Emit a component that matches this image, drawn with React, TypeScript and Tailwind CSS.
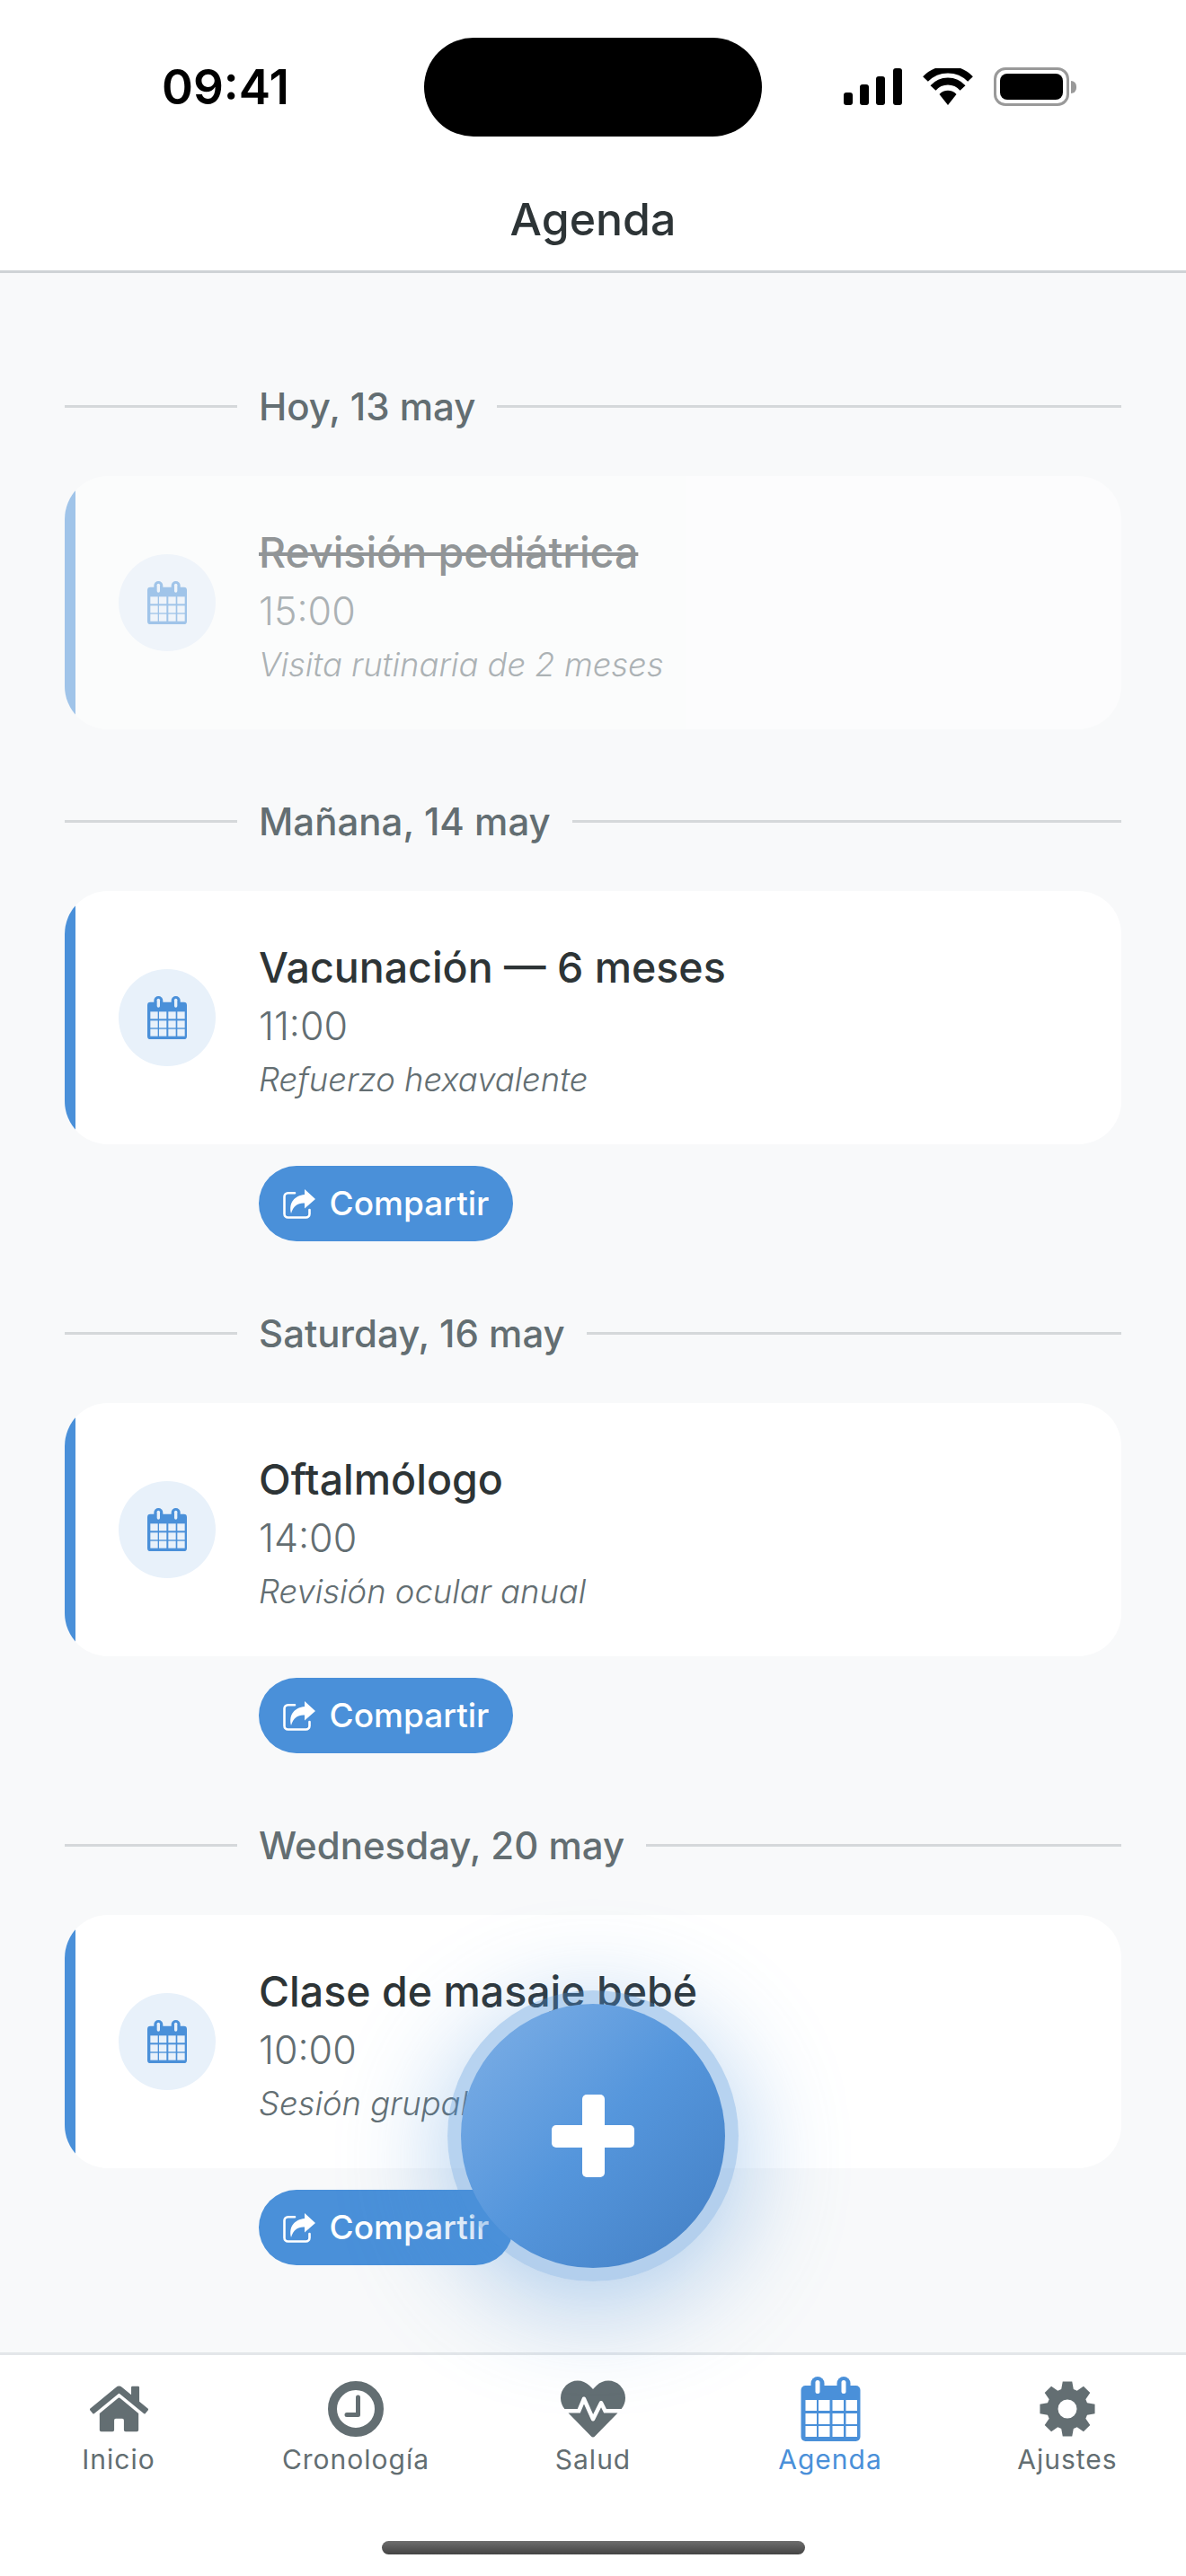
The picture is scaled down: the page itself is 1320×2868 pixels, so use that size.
import { FaHome, FaHeartbeat } from "react-icons/fa"

const font = { fontFamily: "Inter, 'Noto Sans', sans-serif" }

const events = [
  { date: "Hoy, 13 may", title: "Revisión pediátrica", time: "15:00", note: "Visita rutinaria de 2 meses", done: true },
  { date: "Mañana, 14 may", title: "Vacunación — 6 meses", time: "11:00", note: "Refuerzo hexavalente" },
  { date: "Saturday, 16 may", title: "Oftalmólogo", time: "14:00", note: "Revisión ocular anual" },
  { date: "Wednesday, 20 may", title: "Clase de masaje bebé", time: "10:00", note: "Sesión grupal" },
]

function gearPath() {
  const pts: string[] = []
  const teeth = 8
  const step = (Math.PI * 2) / teeth
  for (let i = 0; i < teeth; i++) {
    const a = i * step - Math.PI / 2
    const p = (r: number, o: number) =>
      `${(31 + r * Math.cos(a + o)).toFixed(2)} ${(31 + r * Math.sin(a + o)).toFixed(2)}`
    pts.push(p(23, -0.3), p(31, -0.17), p(31, 0.17), p(23, 0.3))
  }
  const hole = "M31 20.5a10.5 10.5 0 1 0 0 21a10.5 10.5 0 1 0 0-21z"
  return `M${pts.join("L")}z${hole}`
}

function CalendarIcon({ className, cut }: { className: string; cut: string }) {
  const cols = [5, 19.5, 35, 50]
  const rows = [26, 41, 55]
  return (
    <svg viewBox="0 0 66 72" className={className} fill="currentColor">
      <rect x="0" y="10" width="66" height="62" rx="5" />
      <rect x="11" y="0" width="15" height="24" rx="7.5" />
      <rect x="40" y="0" width="15" height="24" rx="7.5" />
      <rect x="16" y="4" width="5" height="15" rx="2.5" fill={cut} />
      <rect x="45" y="4" width="5" height="15" rx="2.5" fill={cut} />
      {rows.map((y) =>
        cols.map((x) => <rect key={`${x}-${y}`} x={x} y={y} width="12.5" height="12" fill={cut} />)
      )}
    </svg>
  )
}

function ClockIcon({ className }: { className: string }) {
  return (
    <svg viewBox="0 0 62 62" className={className} fill="none" stroke="currentColor">
      <circle cx="31" cy="31" r="26" strokeWidth="10" />
      <path d="M33.5 18v19.5H21" strokeWidth="5" strokeLinecap="round" strokeLinejoin="round" />
    </svg>
  )
}

function ShareIcon({ className }: { className: string }) {
  return (
    <svg viewBox="0 0 36 33" className={className} fill="none">
      <path d="M13 4.2H5.5A4 4 0 0 0 1.5 8.2V27.5A4 4 0 0 0 5.5 31.5H25.5A4 4 0 0 0 29.5 27.5V23" stroke="white" strokeWidth="2.6" strokeLinecap="round" />
      <path d="M24 0L36 11L24 21.5V15.5C17 15 11.5 18 9 27C6 15 13 7 24 6Z" fill="white" />
    </svg>
  )
}

function StatusBar() {
  return (
    <div className="h-[196px] flex items-start justify-between relative">
      <span className="mt-[69px] ml-[180px] text-[53px] leading-[56px] font-semibold text-black">09:41</span>
      <div className="mt-[42px] absolute left-[472px] w-[376px] h-[110px] rounded-full bg-black" />
      <div className="mt-[75px] mr-[122px] flex items-center gap-[22px]">
        <svg viewBox="0 0 65 41" className="w-[65px] h-[41px]" fill="black">
          <rect x="0" y="27" width="10" height="14" rx="3" />
          <rect x="18" y="18" width="10" height="23" rx="3" />
          <rect x="36" y="9" width="10" height="32" rx="3" />
          <rect x="55" y="0" width="10" height="41" rx="3" />
        </svg>
        <svg viewBox="0 0 58 41" className="w-[58px] h-[41px]">
          <path d="M29 41 L19.5 29 A13 13 0 0 1 38.5 29 Z" fill="black" />
          <path d="M12.5 22 A22 22 0 0 1 45.5 22" stroke="black" strokeWidth="8" fill="none" />
          <path d="M4 12 A35 35 0 0 1 54 12" stroke="black" strokeWidth="8" fill="none" />
        </svg>
        <div className="flex items-center">
          <div className="w-[84px] h-[43px] rounded-[13px] border-[3px] border-[#999999] p-[4px]">
            <div className="w-full h-full rounded-[8px] bg-black" />
          </div>
          <div className="w-[6px] h-[14px] ml-[2px] rounded-r-full bg-[#999999]" />
        </div>
      </div>
    </div>
  )
}

function EventCard({ title, time, note, done }: { title: string; time: string; note: string; done?: boolean }) {
  return (
    <div className={`h-[282px] rounded-[48px] overflow-hidden bg-white flex items-center ${done ? "opacity-50" : ""}`}>
      <div className="w-[12px] self-stretch bg-[#4a90d9]" />
      <div className="ml-[48px] w-[108px] h-[108px] rounded-full bg-[#e8f1fa] flex items-center justify-center">
        <CalendarIcon className="w-[44px] h-[48px] text-[#4a90d9]" cut="#e8f1fa" />
      </div>
      <div className="ml-[48px] mt-[10px] flex flex-col">
        <div className={`mb-[2px] text-[46.5px] leading-[66px] font-medium text-[#2d3436] ${done ? "line-through" : ""}`}>{title}</div>
        <div className="text-[43px] leading-[60px] font-light text-[#636e72]">{time}</div>
        <div className="text-[36.4px] leading-[60px] font-light italic text-[#636e72]">{note}</div>
      </div>
    </div>
  )
}

function Tab({ label, active, children }: { label: string; active?: boolean; children: React.ReactNode }) {
  return (
    <div className={`flex flex-col items-center ${active ? "text-[#4a90d9]" : "text-[#636e72]"}`}>
      <div className="h-[74px] flex items-center justify-center">{children}</div>
      <span className="mt-[1px] text-[30px] leading-[36px] font-normal tracking-[1px]">{label}</span>
    </div>
  )
}

export default function App() {
  return (
    <div className="relative w-[1320px] h-[2868px] overflow-hidden flex flex-col bg-[#f8f9fa]" style={font}>
      <header className="h-[304px] bg-white border-b-[3px] border-[#cfd3d6]">
        <StatusBar />
        <h1 className="text-center text-[50px] leading-[96px] font-medium text-[#2d3436]">Agenda</h1>
      </header>

      <main className="flex-1 px-[72px] pt-[121px]">
        {events.map((ev) => (
          <section key={ev.date} className="mb-[75px]">
            <div className="flex items-center gap-[24px] h-[54px] mb-[51px]">
              <div className="w-[192px] h-[3px] bg-[#d5d8da]" />
              <span className="text-[42px] font-[450] text-[#636e72]">{ev.date}</span>
              <div className="flex-1 h-[3px] bg-[#d5d8da]" />
            </div>
            <EventCard title={ev.title} time={ev.time} note={ev.note} done={ev.done} />
            {!ev.done && (
              <button className="mt-[24px] ml-[216px] h-[84px] w-[283px] rounded-full bg-[#4a90d9] flex items-center justify-center gap-[16px] text-white text-[37px] font-medium">
                <ShareIcon className="w-[36px] h-[33px]" />
                Compartir
              </button>
            )}
          </section>
        ))}
      </main>

      <nav className="h-[249px] bg-white border-t-[3px] border-[#e3e6e9] grid grid-cols-5 pt-[23px]">
        <Tab label="Inicio"><FaHome className="w-[65px] h-[58px]" /></Tab>
        <Tab label="Cronología"><ClockIcon className="w-[62px] h-[62px]" /></Tab>
        <Tab label="Salud"><FaHeartbeat className="w-[72px] h-[72px]" /></Tab>
        <Tab label="Agenda" active><CalendarIcon className="w-[67px] h-[72px]" cut="#ffffff" /></Tab>
        <Tab label="Ajustes">
          <svg viewBox="0 0 62 62" className="w-[62px] h-[62px]" fill="currentColor">
            <path fillRule="evenodd" d={gearPath()} />
          </svg>
        </Tab>
      </nav>

      {/* home indicator */}
      <div className="absolute bottom-[24px] left-[425px] w-[471px] h-[15px] rounded-full bg-gradient-to-b from-[#6e6e6e] to-[#444444]" />

      {/* floating add button */}
      <div className="absolute left-[498px] top-[2216px] w-[324px] h-[324px] rounded-full bg-[#4a90d9]/40 flex items-center justify-center shadow-[0_24px_120px_rgba(74,144,217,0.45)]">
        <div className="relative w-[294px] h-[294px] rounded-full bg-gradient-to-br from-[#7fb0e6] via-[#5596dc] to-[#437fc4] flex items-center justify-center">
          <div className="absolute w-[92px] h-[25px] rounded-[5px] bg-white" />
          <div className="absolute w-[25px] h-[92px] rounded-[5px] bg-white" />
        </div>
      </div>
    </div>
  )
}
